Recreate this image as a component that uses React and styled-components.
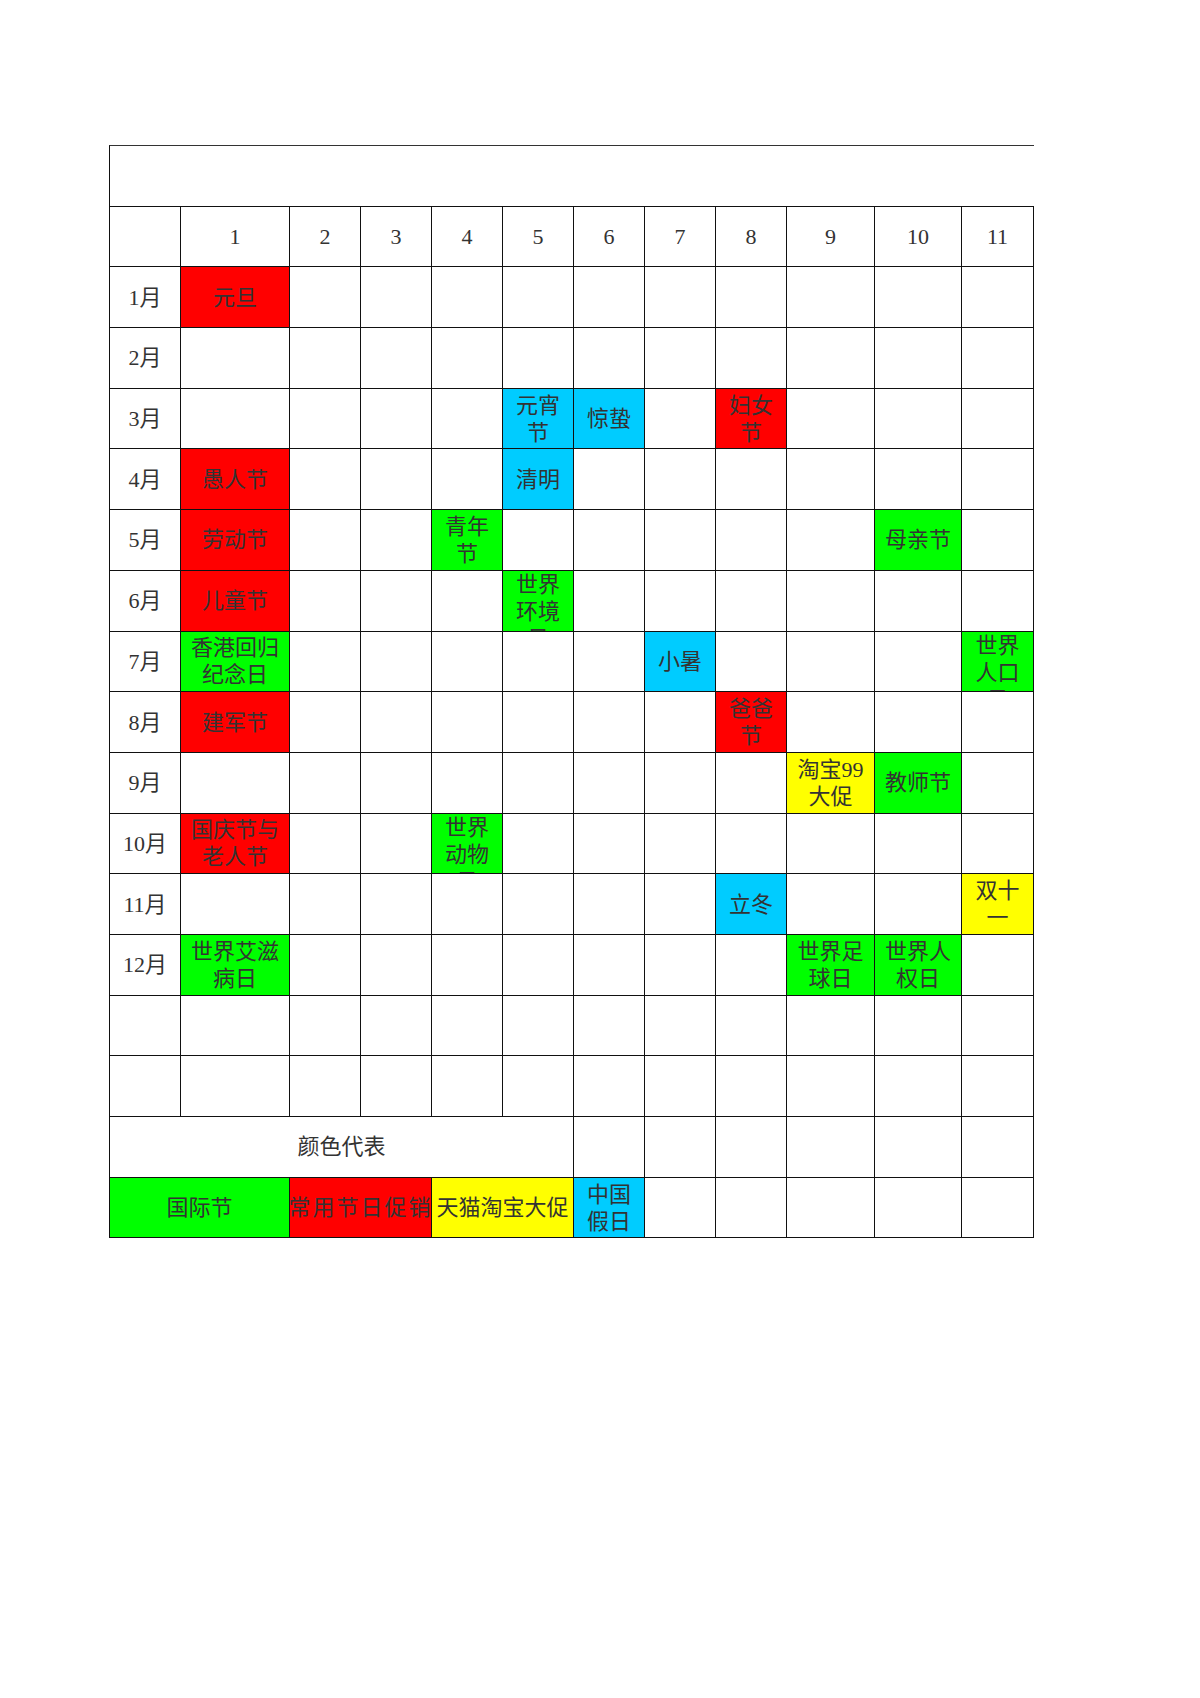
import React from 'react';
import styled, { createGlobalStyle } from 'styled-components';

const COLORS = {
  red: '#ff0000',
  green: '#00ff00',
  yellow: '#ffff00',
  blue: '#00ccff',
};

const COLUMN_WIDTHS = [71, 109, 71, 71, 71, 71, 71, 71, 71, 88, 87, 72];

// month -> { column: [text, color] }
const EVENTS = {
  1: { 1: ['元旦', 'red'] },
  2: {},
  3: { 5: ['元宵节', 'blue'], 6: ['惊蛰', 'blue'], 8: ['妇女节', 'red'] },
  4: { 1: ['愚人节', 'red'], 5: ['清明', 'blue'] },
  5: { 1: ['劳动节', 'red'], 4: ['青年节', 'green'], 10: ['母亲节', 'green'] },
  6: { 1: ['儿童节', 'red'], 5: ['世界环境日', 'green'] },
  7: { 1: ['香港回归纪念日', 'green'], 7: ['小暑', 'blue'], 11: ['世界人口日', 'green'] },
  8: { 1: ['建军节', 'red'], 8: ['爸爸节', 'red'] },
  9: { 9: ['淘宝99大促', 'yellow'], 10: ['教师节', 'green'] },
  10: { 1: ['国庆节与老人节', 'red'], 4: ['世界动物日', 'green'] },
  11: { 8: ['立冬', 'blue'], 11: ['双十一', 'yellow'] },
  12: { 1: ['世界艾滋病日', 'green'], 9: ['世界足球日', 'green'], 10: ['世界人权日', 'green'] },
};

const LEGEND = [
  ['国际节', 'green', 2],
  ['常用节日促销', 'red', 2],
  ['天猫淘宝大促', 'yellow', 2],
  ['中国假日', 'blue', 1],
];

const GlobalStyle = createGlobalStyle`
  html, body {
    margin: 0;
    padding: 0;
    background: #fff;
  }
  body {
    font-family: "Liberation Serif", "Noto Sans CJK SC", serif;
  }
`;

const Page = styled.div`
  width: 1200px;
  min-height: 1698px;
  padding: 145px 0 0 109px;
  box-sizing: border-box;
`;

const Sheet = styled.div`
  display: grid;
  grid-template-columns: ${COLUMN_WIDTHS.map((w) => `${w}px`).join(' ')};
  grid-auto-rows: 60.7px;
  width: max-content;
  border-top: 1px solid #333;
  border-left: 1px solid #111;
`;

const Cell = styled.div`
  grid-column: span ${({ $span }) => $span || 1};
  display: flex;
  justify-content: center;
  overflow: hidden;
  box-sizing: border-box;
  border-right: ${({ $noRight }) => ($noRight ? 'none' : '1px solid #111')};
  border-bottom: 1px solid #111;
  background: ${({ $bg }) => ($bg ? COLORS[$bg] : '#fff')};
  color: #333;
  font-size: 22px;
  line-height: 27px;
`;

const CellText = styled.span`
  margin: auto;
  padding: 0 4px;
  text-align: center;
  white-space: ${({ $nowrap }) => ($nowrap ? 'nowrap' : 'normal')};
  flex-shrink: 0;
  max-width: ${({ $nowrap }) => ($nowrap ? 'none' : '100%')};
  box-sizing: border-box;
`;

const LegendText = styled.span`
  align-self: center;
  white-space: nowrap;
  flex-shrink: 0;
  letter-spacing: ${({ $wide }) => ($wide ? '2px' : '0')};
`;

export default function App() {
  const columns = COLUMN_WIDTHS.map((_, i) => i);
  const months = Object.keys(EVENTS).map(Number);

  return (
    <>
      <GlobalStyle />
      <Page>
        <Sheet>
          <Cell $span={12} $noRight />

          {columns.map((c) => (
            <Cell key={`h${c}`}>
              <CellText>{c === 0 ? '' : c}</CellText>
            </Cell>
          ))}

          {months.map((m) =>
            columns.map((c) => {
              if (c === 0) {
                return (
                  <Cell key={`${m}-0`}>
                    <CellText $nowrap>{m}月</CellText>
                  </Cell>
                );
              }
              const ev = EVENTS[m][c];
              return (
                <Cell key={`${m}-${c}`} $bg={ev && ev[1]}>
                  {ev && <CellText>{ev[0]}</CellText>}
                </Cell>
              );
            })
          )}

          {[0, 1].map((r) =>
            columns.map((c) => <Cell key={`e${r}-${c}`} />)
          )}

          <Cell $span={6}>
            <CellText $nowrap>颜色代表</CellText>
          </Cell>
          {columns.slice(6).map((c) => (
            <Cell key={`k${c}`} />
          ))}

          {LEGEND.map(([label, color, span]) => (
            <Cell key={label} $bg={color} $span={span}>
              {span === 1 ? (
                <CellText>{label}</CellText>
              ) : (
                <LegendText $wide={label === '常用节日促销'}>{label}</LegendText>
              )}
            </Cell>
          ))}
          {columns.slice(7).map((c) => (
            <Cell key={`l${c}`} />
          ))}
        </Sheet>
      </Page>
    </>
  );
}
